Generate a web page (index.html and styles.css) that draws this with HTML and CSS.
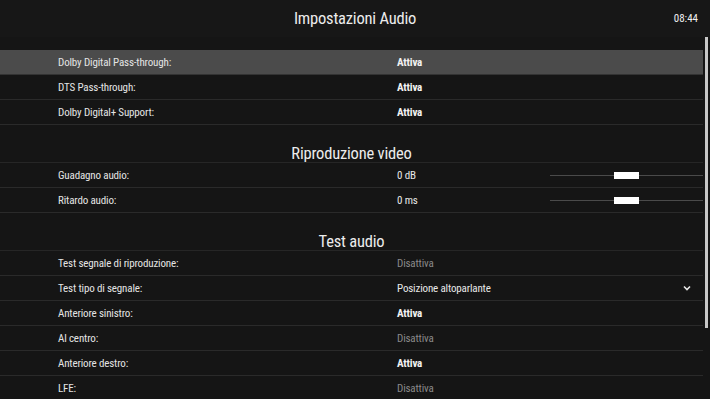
FILE: index.html
```html
<!DOCTYPE html>
<html lang="it">
<head>
    <meta charset="UTF-8">
    <meta name="viewport" content="width=device-width, initial-scale=1.0">
    <title>Impostazioni Audio</title>
    <link rel="stylesheet" href="styles.css">
</head>
<body>
    <div class="screen">
        <div class="topbar">
            <h1 class="title">Impostazioni Audio</h1>
            <span class="clock">08:44</span>
        </div>

        <div class="content">
            <div class="list">
                <div class="row selected">
                    <span class="label">Dolby Digital Pass-through:</span>
                    <span class="value on">Attiva</span>
                </div>
                <div class="row">
                    <span class="label">DTS Pass-through:</span>
                    <span class="value on">Attiva</span>
                </div>
                <div class="row">
                    <span class="label">Dolby Digital+ Support:</span>
                    <span class="value on">Attiva</span>
                </div>

                <div class="section">Riproduzione video</div>
                <div class="row">
                    <span class="label">Guadagno audio:</span>
                    <span class="value">0 dB</span>
                    <div class="slider"><span class="thumb"></span></div>
                </div>
                <div class="row">
                    <span class="label">Ritardo audio:</span>
                    <span class="value">0 ms</span>
                    <div class="slider"><span class="thumb"></span></div>
                </div>

                <div class="section">Test audio</div>
                <div class="row">
                    <span class="label">Test segnale di riproduzione:</span>
                    <span class="value off">Disattiva</span>
                </div>
                <div class="row">
                    <span class="label">Test tipo di segnale:</span>
                    <span class="value">Posizione altoparlante</span>
                    <svg class="chevron" width="8" height="6" viewBox="0 0 8 6"><path d="M1 1.5 L4 4.5 L7 1.5" fill="none" stroke="#e8e8e8" stroke-width="1.6"/></svg>
                </div>
                <div class="row">
                    <span class="label">Anteriore sinistro:</span>
                    <span class="value on">Attiva</span>
                </div>
                <div class="row">
                    <span class="label">Al centro:</span>
                    <span class="value off">Disattiva</span>
                </div>
                <div class="row">
                    <span class="label">Anteriore destro:</span>
                    <span class="value on">Attiva</span>
                </div>
                <div class="row">
                    <span class="label">LFE:</span>
                    <span class="value off">Disattiva</span>
                </div>
            </div>
            <div class="scrollbar"><span class="scroll-thumb"></span></div>
        </div>
    </div>
</body>
</html>
```

FILE: styles.css
```css
html, body {
    margin: 0;
    padding: 0;
    background-color: #151515;
}
body {
    font-family: Roboto, "Liberation Sans", sans-serif;
    font-stretch: condensed;
    color: #e6e6e6;
    width: 710px;
    height: 399px;
    overflow: hidden;
}
.screen {
    display: flex;
    flex-direction: column;
}
.topbar {
    height: 37px;
    display: flex;
    align-items: center;
    justify-content: center;
    position: relative;
    background-color: #171717;
}
.title {
    margin: 0;
    font-size: 16.5px;
    font-weight: normal;
    color: #ececec;
    letter-spacing: -0.2px;
}
.clock {
    position: absolute;
    right: 12px;
    top: 12px;
    font-size: 11px;
    color: #f0f0f0;
}
.content {
    display: flex;
}
.list {
    width: 703px;
    padding-top: 13px;
}
.row {
    height: 24px;
    border-bottom: 1px solid #2a2a2a;
    display: flex;
    align-items: center;
    font-size: 11px;
    letter-spacing: -0.15px;
}
.row.selected {
    background-color: #4b4b4b;
    border-bottom-color: #333;
}
.label {
    width: 339px;
    padding-left: 58px;
    color: #e4e4e4;
}
.value {
    width: 153px;
    color: #e8e8e8;
}
.value.on {
    font-weight: bold;
    color: #f2f2f2;
}
.value.off {
    color: #8a8a8a;
}
.section {
    height: 38px;
    border-bottom: 1px solid #262626;
    display: flex;
    align-items: flex-end;
    justify-content: center;
    box-sizing: border-box;
    font-size: 16.5px;
    line-height: 16px;
    color: #ececec;
    letter-spacing: -0.2px;
}
.slider {
    flex: 1;
    height: 1px;
    background-color: #4a4a4a;
    position: relative;
}
.thumb {
    position: absolute;
    left: 64px;
    top: -3px;
    width: 25px;
    height: 7px;
    background-color: #ffffff;
}
.chevron {
    margin-left: auto;
    margin-right: 12px;
}
.scrollbar {
    width: 7px;
    position: relative;
}
.scroll-thumb {
    position: absolute;
    left: 2px;
    top: 0;
    width: 3px;
    height: 291px;
    background-color: #c8c8c8;
}
```
